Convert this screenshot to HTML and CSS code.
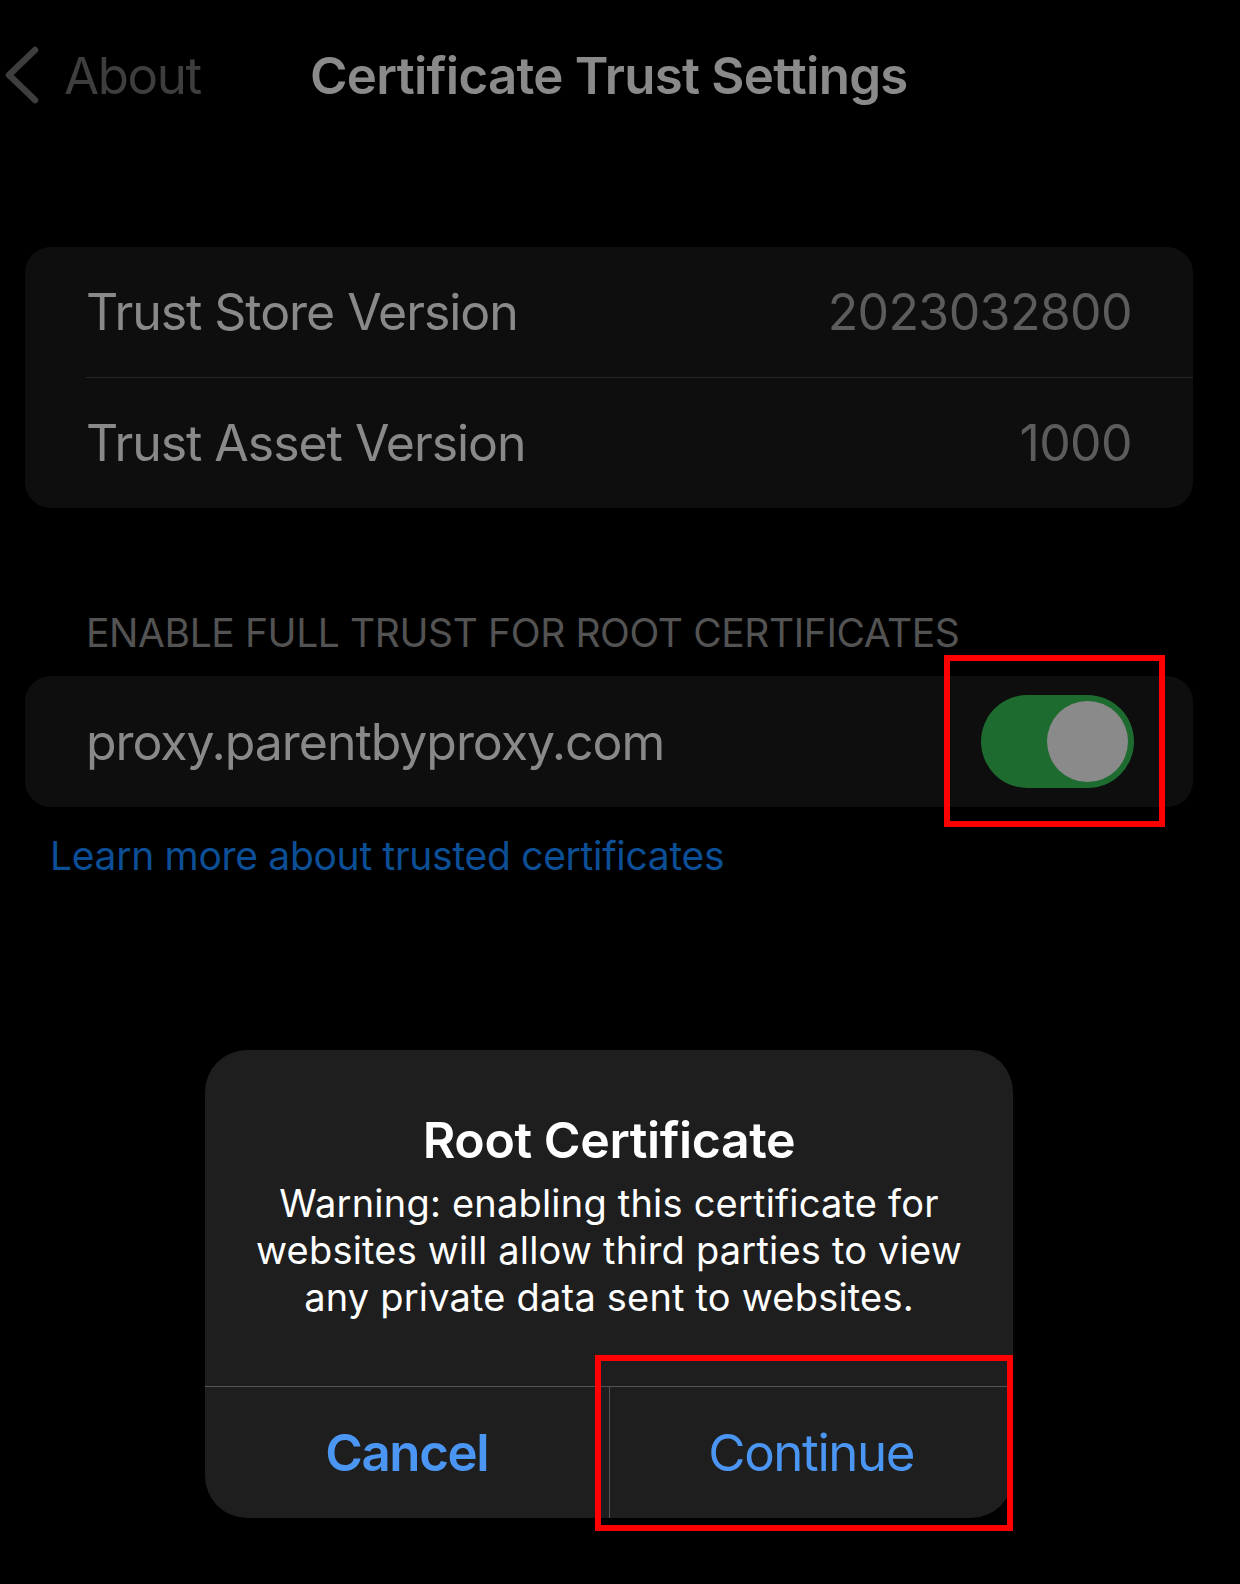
FILE: index.html
```html
<!DOCTYPE html>
<html lang="en">
<head>
<meta charset="utf-8">
<title>Certificate Trust Settings</title>
<link rel="stylesheet" href="styles.css">
</head>
<body>
<div class="screen">
  <header class="nav">
    <div class="back">
      <svg class="chev" width="40" height="60" viewBox="0 0 40 60"><path d="M33 5 L7 30 L33 55" fill="none" stroke="#3e3e3e" stroke-width="6.5" stroke-linecap="round" stroke-linejoin="round"/></svg>
      <span class="back-label">About</span>
    </div>
    <h1 class="title">Certificate Trust Settings</h1>
  </header>

  <section class="card versions">
    <div class="row"><span class="label">Trust Store Version</span><span class="value">2023032800</span></div>
    <div class="sep"></div>
    <div class="row"><span class="label">Trust Asset Version</span><span class="value">1000</span></div>
  </section>

  <div class="section-head">ENABLE FULL TRUST FOR ROOT CERTIFICATES</div>

  <section class="card trust">
    <div class="row"><span class="label">proxy.parentbyproxy.com</span><span class="toggle"><span class="knob"></span></span></div>
  </section>

  <div class="link">Learn more about trusted certificates</div>

  <div class="alert">
    <div class="alert-body">
      <div class="alert-title">Root Certificate</div>
      <div class="alert-msg">Warning: enabling this certificate for<br>websites will allow third parties to view<br>any private data sent to websites.</div>
    </div>
    <div class="alert-actions">
      <div class="btn btn-cancel">Cancel</div>
      <div class="btn btn-continue">Continue</div>
    </div>
  </div>

  <div class="mark mark-toggle"></div>
  <div class="mark mark-continue"></div>
</div>
</body>
</html>
```

FILE: styles.css
```css
html, body {
  margin: 0;
  padding: 0;
  background: #000;
}
.screen {
  position: relative;
  width: 1240px;
  height: 1584px;
  overflow: hidden;
  background: #000;
  font-family: Inter, "Liberation Sans", sans-serif;
  -webkit-font-smoothing: antialiased;
}
.nav {
  height: 150px;
  display: flex;
  align-items: center;
}
.back {
  width: 310px;
  display: flex;
  align-items: center;
  flex-shrink: 0;
}
.chev {
  margin-left: 2px;
}
.back-label {
  margin-left: 22px;
  font-size: 51px;
  color: #3e3e3e;
  letter-spacing: -1.4px;
}
.title {
  margin: 0;
  font-size: 51px;
  font-weight: 600;
  color: #8a8a8a;
  letter-spacing: -0.75px;
}
.card {
  margin-left: 25px;
  width: 1168px;
  background: #0e0e0e;
  border-radius: 26px;
}
.versions {
  margin-top: 97px;
}
.row {
  height: 130px;
  display: flex;
  align-items: center;
  justify-content: space-between;
  padding: 0 61px;
}
.label {
  font-size: 50px;
  color: #898989;
  letter-spacing: -1.05px;
}
.value {
  font-size: 50px;
  color: #5c5c5c;
  letter-spacing: -0.6px;
}
.sep {
  height: 1px;
  margin-left: 61px;
  background: #262626;
}
.section-head {
  margin-top: 101px;
  margin-left: 86px;
  height: 48px;
  line-height: 48px;
  font-size: 39px;
  color: #535353;
  letter-spacing: -0.4px;
}
.trust {
  margin-top: 19px;
}
.trust .row {
  height: 131px;
  padding-right: 59px;
}
.toggle {
  position: relative;
  width: 153px;
  height: 93px;
  border-radius: 47px;
  background: #1d6b2f;
}
.knob {
  position: absolute;
  right: 6px;
  top: 6px;
  width: 81px;
  height: 81px;
  border-radius: 50%;
  background: #8a8a8a;
}
.link {
  margin-top: 25px;
  margin-left: 50px;
  height: 48px;
  line-height: 48px;
  font-size: 39px;
  color: #0c4f97;
  letter-spacing: -0.3px;
}
.alert {
  position: absolute;
  left: 205px;
  top: 1050px;
  width: 808px;
  height: 468px;
  background: #1e1e1e;
  border-radius: 42px;
  display: flex;
  flex-direction: column;
  overflow: hidden;
}
.alert-body {
  flex: 1;
  padding-top: 60px;
  text-align: center;
  color: #fff;
}
.alert-title {
  font-size: 50px;
  font-weight: 600;
  line-height: 60px;
  letter-spacing: -0.4px;
}
.alert-msg {
  margin-top: 10px;
  font-size: 38px;
  line-height: 47px;
  letter-spacing: 0.2px;
}
.alert-actions {
  height: 131px;
  border-top: 1px solid #555;
  display: flex;
}
.btn {
  flex: 1;
  display: flex;
  align-items: center;
  justify-content: center;
  font-size: 51px;
  color: #4b96f3;
  letter-spacing: -1.4px;
}
.btn-cancel {
  font-weight: 600;
  border-right: 1px solid #555;
}
.mark {
  position: absolute;
  border: 6px solid #ff0000;
  box-sizing: border-box;
}
.mark-toggle {
  left: 944px;
  top: 655px;
  width: 221px;
  height: 172px;
}
.mark-continue {
  left: 595px;
  top: 1355px;
  width: 418px;
  height: 176px;
}
```
